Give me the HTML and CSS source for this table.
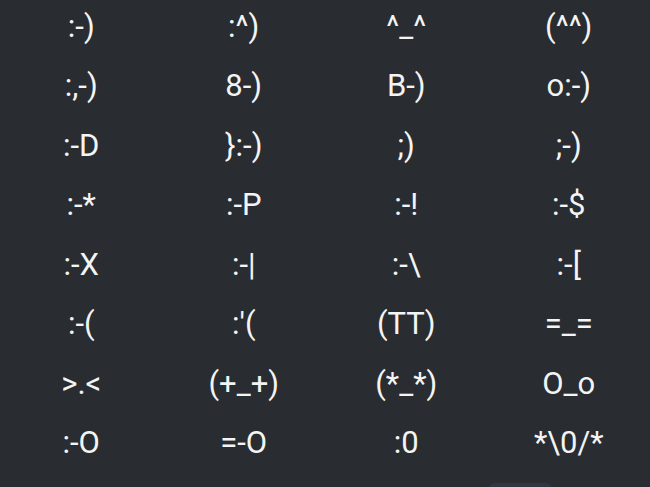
FILE: index.html
```html
<!DOCTYPE html>
<html lang="en">
<head>
<meta charset="utf-8">
<title>Emoticons</title>
<link rel="stylesheet" href="styles.css">
</head>
<body>
<div class="grid">
  <div class="cell">:-)</div>
  <div class="cell">:^)</div>
  <div class="cell">^_^</div>
  <div class="cell">(^^)</div>

  <div class="cell">:,-)</div>
  <div class="cell">8-)</div>
  <div class="cell">B-)</div>
  <div class="cell">o:-)</div>

  <div class="cell">:-D</div>
  <div class="cell">}:-)</div>
  <div class="cell">;)</div>
  <div class="cell">;-)</div>

  <div class="cell">:-*</div>
  <div class="cell">:-P</div>
  <div class="cell">:-!</div>
  <div class="cell">:-$</div>

  <div class="cell">:-X</div>
  <div class="cell">:-|</div>
  <div class="cell">:-\</div>
  <div class="cell">:-[</div>

  <div class="cell">:-(</div>
  <div class="cell">:'(</div>
  <div class="cell">(TT)</div>
  <div class="cell">=_=</div>

  <div class="cell">&gt;.&lt;</div>
  <div class="cell">(+_+)</div>
  <div class="cell">(*_*)</div>
  <div class="cell">O_o</div>

  <div class="cell">:-O</div>
  <div class="cell">=-O</div>
  <div class="cell">:0</div>
  <div class="cell">*\0/*</div>
</div>
<div class="handle"></div>
</body>
</html>
```

FILE: styles.css
```css
html, body {
  margin: 0;
  padding: 0;
  background: #292c31;
  height: 100%;
  overflow: hidden;
}

body {
  position: relative;
  font-family: Roboto, "Noto Sans", sans-serif;
  color: #f4f4f4;
}

.grid {
  display: grid;
  grid-template-columns: repeat(4, 1fr);
  grid-auto-rows: 59.5px;
  align-items: center;
}

.cell {
  text-align: center;
  font-size: 31px;
  line-height: 36px;
  padding-bottom: 6px;
  white-space: pre;
}

.handle {
  position: absolute;
  left: 489px;
  top: 483px;
  width: 63px;
  height: 12px;
  border-radius: 6px;
  background: #2f3541;
}
```
